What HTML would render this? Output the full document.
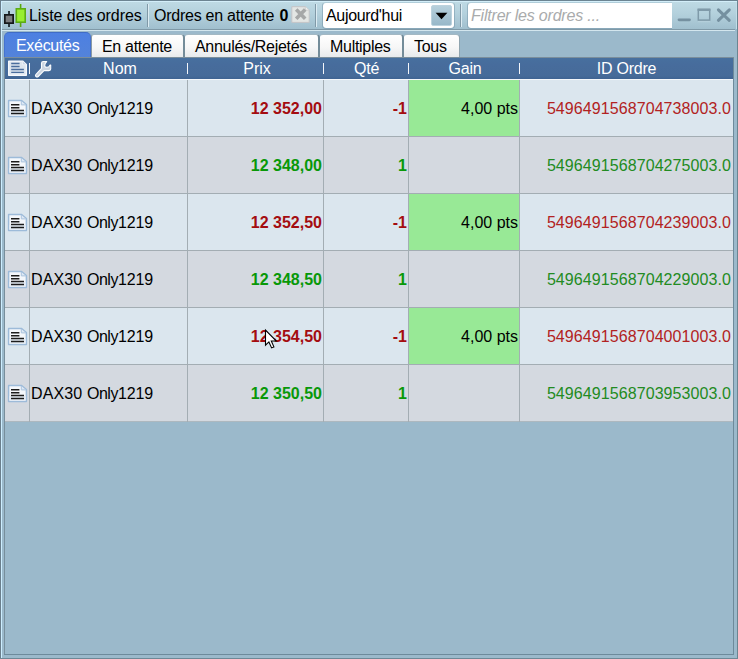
<!DOCTYPE html>
<html lang="fr">
<head>
<meta charset="utf-8">
<title>Liste des ordres</title>
<style>
html,body{margin:0;padding:0;}
body{width:738px;height:659px;overflow:hidden;background:#9bb9cb;font-family:"Liberation Sans",Arial,sans-serif;font-size:16px;color:#000;}
#win{position:absolute;left:0;top:0;width:738px;height:659px;background:#9bb9cb;overflow:hidden;}
.abs{position:absolute;}
/* toolbar */
#tb{left:2px;top:2px;width:734px;height:27px;background:linear-gradient(#bedae4,#b3d0dc 45%,#a0bfce);}
#tb-b0{left:2px;top:29px;width:733px;height:1px;background:#7f99a7;}
#tb-b1{left:2px;top:30px;width:733px;height:1px;background:#d3e6ee;}
.sep{width:1px;background:#8099a7;top:4px;height:23px;}
.sepl{width:1px;background:#dcecf3;top:4px;height:23px;}
.tbt{top:6px;line-height:20px;white-space:nowrap;}
/* tabs */
.tab{top:34px;height:23px;box-sizing:border-box;border:0 solid #748c99;border-top:1px solid #a3b8c3;border-right:2px solid #748c99;border-radius:3px 4px 0 0;background:linear-gradient(#ffffff,#f7f7f7 55%,#e8eaec);}
.tab.sel{top:32px;height:25px;border:1px solid #4573cf;border-bottom:none;border-top-color:#3f6cc6;border-radius:5px 5px 0 0;background:linear-gradient(#4d80e2,#5383da);}
.tt{line-height:20px;white-space:nowrap;letter-spacing:-0.3px;}
/* header */
#hd{left:5px;top:57px;width:728px;height:22px;background:linear-gradient(#47709f,#476c9c 35%,#466b99 85%,#3f6392);}
.ht{top:59px;line-height:20px;color:#fff;text-align:center;white-space:nowrap;}
.hs{top:63px;width:1px;height:11px;background:#f2f5f9;}
/* rows */
.row{left:5px;width:728px;height:56px;}
.odd{background:#dbe6ee;}
.even{background:#d4d9e0;}
.hl{left:5px;width:728px;height:1px;background:#a3adb3;}
.hl.last{background:#adb8bf;}
.vl{top:80px;width:1px;height:342px;background:#a3adb3;}
.gain{left:409px;width:110px;height:56px;background:#98e996;}
.c{line-height:20px;white-space:nowrap;}
.nm{left:31px;}
.w1{letter-spacing:0.13px;}
.w2{letter-spacing:-0.45px;}
.w3{letter-spacing:-0.15px;}
.px{left:188px;width:134px;text-align:right;font-weight:bold;}
.qt{left:324px;width:83px;text-align:right;font-weight:bold;}
.gn{left:409px;width:109px;text-align:right;}
.id{left:520px;width:211px;text-align:right;letter-spacing:0.08px;}
.r{color:#a40c10;}
.g{color:#089808;}
.idr{color:#b22222;}
.idg{color:#228b22;}
</style>
</head>
<body>
<div id="win">
  <div class="abs" id="tb"></div>
  <div class="abs" id="tb-b0"></div>
  <div class="abs" id="tb-b1"></div>
  <!-- frame -->
  <div class="abs" style="left:0;top:0;width:738px;height:1px;background:#6c8492"></div>
  <div class="abs" style="left:1px;top:1px;width:736px;height:1px;background:#d3eef9"></div>
  <div class="abs" style="left:0;top:0;width:1px;height:659px;background:#6b7f8c"></div>
  <div class="abs" style="left:1px;top:1px;width:1px;height:657px;background:#cdeeff"></div>
  <div class="abs" style="left:737px;top:0;width:1px;height:659px;background:#6b8591"></div>
  <div class="abs" style="left:736px;top:2px;width:1px;height:27px;background:#c2dde8"></div>
  <div class="abs" style="left:0;top:658px;width:738px;height:1px;background:#6e8896"></div>
  <div class="abs" style="left:4px;top:57px;width:1px;height:597px;background:#778e9b"></div>
  <div class="abs" style="left:733px;top:57px;width:1px;height:598px;background:#6e8a9b"></div>
  <div class="abs" style="left:4px;top:654px;width:730px;height:1px;background:#6d8a9b"></div>

  <!-- candle icon -->
  <svg class="abs" style="left:2px;top:2px" width="26" height="27" viewBox="0 0 26 27">
    <rect x="6" y="9" width="2" height="16" fill="#2c3940"/>
    <rect x="2.85" y="12.85" width="8.3" height="8.3" fill="#7b7d80" stroke="#15181a" stroke-width="1.7"/>
    <rect x="17.8" y="2" width="1.6" height="23" fill="#5aa80e"/>
    <rect x="14.3" y="6.8" width="8.9" height="13.4" fill="#98ee30" stroke="#5cad12" stroke-width="1.6"/>
  </svg>
  <div class="abs tbt" style="left:29px;letter-spacing:-0.07px">Liste des ordres</div>
  <div class="abs sep" style="left:147px"></div><div class="abs sepl" style="left:148px"></div>
  <div class="abs tbt" style="left:154px;letter-spacing:-0.25px">Ordres en attente <b style="margin-left:1px">0</b></div>
  <svg class="abs" style="left:290px;top:5px" width="22" height="20" viewBox="0 0 22 20">
    <path d="M1.8 1.7 L15.4 1.7 L19.2 5.2 L19.2 17.4 L1.8 17.4 Z" fill="#e3e6e4" stroke="#c4c4c6" stroke-width="1"/>
    <path d="M15.4 1.7 L15.4 5.2 L19.2 5.2" fill="#eef0ef" stroke="#cbcccd" stroke-width="0.8"/>
    <path d="M6.2 4.6 L15.2 13.8 M15.2 4.6 L6.2 13.8" stroke="#a6a8a8" stroke-width="3.6" stroke-linecap="butt"/>
  </svg>
  <div class="abs sep" style="left:315px"></div><div class="abs sepl" style="left:316px"></div>
  <!-- combo -->
  <div class="abs" style="left:322px;top:2px;width:133px;height:27px;box-sizing:border-box;border:1px solid rgba(110,140,160,0.45);border-top-color:rgba(150,180,195,0.3);border-radius:4px;background:#fff;background-clip:padding-box;"></div>
  <div class="abs tbt" style="left:326px;letter-spacing:-0.33px">Aujourd'hui</div>
  <div class="abs" style="left:431px;top:5px;width:21px;height:21px;box-sizing:border-box;border:1px solid #bcd3de;border-radius:2px;background:linear-gradient(#b6d0dc,#98b8c9);"></div>
  <svg class="abs" style="left:435px;top:12px" width="13" height="8" viewBox="0 0 13 8"><path d="M0.6 0.8 L12.4 0.8 L6.5 7.2 Z" fill="#000"/></svg>
  <div class="abs sep" style="left:460px"></div><div class="abs sepl" style="left:461px"></div>
  <!-- filter -->
  <div class="abs" style="left:467px;top:2px;width:205px;height:27px;box-sizing:border-box;border:1px solid rgba(110,140,160,0.45);border-top-color:rgba(150,180,195,0.3);border-right:none;border-radius:4px 0 0 4px;background:#fff;background-clip:padding-box;"></div>
  <div class="abs tbt" style="left:471px;font-style:italic;color:#a9abac;letter-spacing:-0.2px">Filtrer les ordres ...</div>
  <!-- window buttons -->
  <svg class="abs" style="left:674px;top:4px" width="60" height="22" viewBox="0 0 60 22">
    <path d="M5 15.8 H15.5" stroke="#7590a0" stroke-width="2.8" stroke-linecap="round"/>
    <path d="M24 17.6 H36" stroke="#b4cfdb" stroke-width="1.2"/>
    <rect x="24.3" y="5.5" width="11.4" height="10.6" fill="none" stroke="#7f9aa9" stroke-width="1.5"/>
    <rect x="23.6" y="4.6" width="12.8" height="2.4" fill="#7f9aa9"/>
    <path d="M44.4 5.8 L55.3 16.3 M55.3 5.8 L44.4 16.3" stroke="#7590a0" stroke-width="3" stroke-linecap="round"/>
  </svg>

  <!-- tabs -->
  <div class="abs tab sel" style="left:4px;width:87px"></div>
  <div class="abs tt" style="left:16px;top:36px;color:#fff">Exécutés</div>
  <div class="abs tab" style="left:91px;width:94px;border-left:1px solid #8a9aa4"></div>
  <div class="abs tt" style="left:102px;top:37px">En attente</div>
  <div class="abs tab" style="left:185px;width:135px"></div>
  <div class="abs tt" style="left:195px;top:37px">Annulés/Rejetés</div>
  <div class="abs tab" style="left:320px;width:84px"></div>
  <div class="abs tt" style="left:330px;top:37px">Multiples</div>
  <div class="abs tab" style="left:404px;width:56px;border-right:1px solid #8fa4af"></div>
  <div class="abs tt" style="left:414px;top:37px">Tous</div>

  <!-- header -->
  <div class="abs" id="hd"></div>
  <div class="abs" style="left:5px;top:79px;width:728px;height:1px;background:#f4f7fa"></div>
  <div class="abs" style="left:4px;top:57px;width:730px;height:1px;background:#7b8e9b"></div>
  <svg class="abs" style="left:5px;top:57px" width="55" height="22" viewBox="0 0 55 22">
    <path d="M3.7 4.1 L17.6 4.1 L21.3 7.6 L21.3 18.3 L3.7 18.3 Z" fill="#dde5ee" stroke="#f6f8fb" stroke-width="1.4" stroke-linejoin="round"/>
    <path d="M17.4 4.3 L17.4 7.8 L21.1 7.8" fill="#c9d6e6" stroke="#eef2f7" stroke-width="0.9"/>
    <path d="M6.2 6.5 H14.6 M6.2 9.5 H14.6 M6.2 12.5 H18.9 M6.2 15.4 H18.9" stroke="#4a6d9d" stroke-width="1.3"/>
    <rect x="24" y="6" width="1" height="11" fill="#f2f5f9"/>
    <path d="M31 17.4 L36.5 11.4 L36.5 6.3 Q36.5 4.5 38.3 4.5 L41.7 4.5 Q39.7 6.4 39.7 8.4 Q39.7 10.3 41.7 10.3 Q44.2 10.3 45 8.1 L45.7 8.1 L45.7 12 Q45.7 13.6 43.9 13.6 L39 13.6 L33.2 19.5 Q32.1 20.5 31 19.5 Q29.9 18.5 31 17.4 Z" fill="#cbd5e2" stroke="#fbfcfd" stroke-width="1.1" stroke-linejoin="round"/>
  </svg>
  <div class="abs ht" style="left:56px;width:128px">Nom</div>
  <div class="abs hs" style="left:187px"></div>
  <div class="abs ht" style="left:190px;width:134px">Prix</div>
  <div class="abs hs" style="left:323px"></div>
  <div class="abs ht" style="left:325px;width:83px;letter-spacing:-0.2px">Qté</div>
  <div class="abs hs" style="left:408px"></div>
  <div class="abs ht" style="left:410.5px;width:109px;letter-spacing:-0.25px">Gain</div>
  <div class="abs hs" style="left:519px"></div>
  <div class="abs ht" style="left:521px;width:211px;letter-spacing:-0.25px">ID Ordre</div>

  <!-- rows -->
  <div class="abs row odd" style="top:80px"></div>
  <div class="abs gain" style="top:80px"></div>
  <div class="abs row even" style="top:137px"></div>
  <div class="abs row odd" style="top:194px"></div>
  <div class="abs gain" style="top:194px"></div>
  <div class="abs row even" style="top:251px"></div>
  <div class="abs row odd" style="top:308px"></div>
  <div class="abs gain" style="top:308px"></div>
  <div class="abs row even" style="top:365px"></div>
  <div class="abs hl" style="top:136px"></div>
  <div class="abs hl" style="top:193px"></div>
  <div class="abs hl" style="top:250px"></div>
  <div class="abs hl" style="top:307px"></div>
  <div class="abs hl" style="top:364px"></div>
  <div class="abs hl last" style="top:421px"></div>
  <div class="abs vl" style="left:29px"></div>
  <div class="abs vl" style="left:187px"></div>
  <div class="abs vl" style="left:323px"></div>
  <div class="abs vl" style="left:408px"></div>
  <div class="abs vl" style="left:519px"></div>
<svg class="abs" style="left:7px;top:99px" width="21" height="19" viewBox="0 0 21 19">
    <path d="M1.6 1.6 L14.6 1.6 L19.4 5.6 L19.4 17.4 L1.6 17.4 Z" fill="#f4f7fb" stroke="#9dbbd9" stroke-width="1.5" stroke-linejoin="round"/>
    <path d="M2.4 12 H18.6 V16.6 H2.4 Z" fill="#e4ecf5"/>
    <path d="M14.3 2 L14.3 5.9 L19 5.9" fill="#dde8f4" stroke="#abc4df" stroke-width="1"/>
    <path d="M4 5.8 H12.4 M4 8.7 H12.4 M4 11.5 H17 M4 14.4 H17" stroke="#1c1c1c" stroke-width="1.5"/>
  </svg>
  <div class="abs c nm" style="top:99px"><span class="w1">DAX30 </span><span class="w2">Only</span><span class="w3">1219</span></div>
  <div class="abs c px r" style="top:99px">12 352,00</div>
  <div class="abs c qt r" style="top:99px">-1</div>
  <div class="abs c gn" style="top:99px">4,00 pts</div>
  <div class="abs c id idr" style="top:99px">5496491568704738003.0</div>
<svg class="abs" style="left:7px;top:156px" width="21" height="19" viewBox="0 0 21 19">
    <path d="M1.6 1.6 L14.6 1.6 L19.4 5.6 L19.4 17.4 L1.6 17.4 Z" fill="#f4f7fb" stroke="#9dbbd9" stroke-width="1.5" stroke-linejoin="round"/>
    <path d="M2.4 12 H18.6 V16.6 H2.4 Z" fill="#e4ecf5"/>
    <path d="M14.3 2 L14.3 5.9 L19 5.9" fill="#dde8f4" stroke="#abc4df" stroke-width="1"/>
    <path d="M4 5.8 H12.4 M4 8.7 H12.4 M4 11.5 H17 M4 14.4 H17" stroke="#1c1c1c" stroke-width="1.5"/>
  </svg>
  <div class="abs c nm" style="top:156px"><span class="w1">DAX30 </span><span class="w2">Only</span><span class="w3">1219</span></div>
  <div class="abs c px g" style="top:156px">12 348,00</div>
  <div class="abs c qt g" style="top:156px">1</div>
  <div class="abs c id idg" style="top:156px">5496491568704275003.0</div>
<svg class="abs" style="left:7px;top:213px" width="21" height="19" viewBox="0 0 21 19">
    <path d="M1.6 1.6 L14.6 1.6 L19.4 5.6 L19.4 17.4 L1.6 17.4 Z" fill="#f4f7fb" stroke="#9dbbd9" stroke-width="1.5" stroke-linejoin="round"/>
    <path d="M2.4 12 H18.6 V16.6 H2.4 Z" fill="#e4ecf5"/>
    <path d="M14.3 2 L14.3 5.9 L19 5.9" fill="#dde8f4" stroke="#abc4df" stroke-width="1"/>
    <path d="M4 5.8 H12.4 M4 8.7 H12.4 M4 11.5 H17 M4 14.4 H17" stroke="#1c1c1c" stroke-width="1.5"/>
  </svg>
  <div class="abs c nm" style="top:213px"><span class="w1">DAX30 </span><span class="w2">Only</span><span class="w3">1219</span></div>
  <div class="abs c px r" style="top:213px">12 352,50</div>
  <div class="abs c qt r" style="top:213px">-1</div>
  <div class="abs c gn" style="top:213px">4,00 pts</div>
  <div class="abs c id idr" style="top:213px">5496491568704239003.0</div>
<svg class="abs" style="left:7px;top:270px" width="21" height="19" viewBox="0 0 21 19">
    <path d="M1.6 1.6 L14.6 1.6 L19.4 5.6 L19.4 17.4 L1.6 17.4 Z" fill="#f4f7fb" stroke="#9dbbd9" stroke-width="1.5" stroke-linejoin="round"/>
    <path d="M2.4 12 H18.6 V16.6 H2.4 Z" fill="#e4ecf5"/>
    <path d="M14.3 2 L14.3 5.9 L19 5.9" fill="#dde8f4" stroke="#abc4df" stroke-width="1"/>
    <path d="M4 5.8 H12.4 M4 8.7 H12.4 M4 11.5 H17 M4 14.4 H17" stroke="#1c1c1c" stroke-width="1.5"/>
  </svg>
  <div class="abs c nm" style="top:270px"><span class="w1">DAX30 </span><span class="w2">Only</span><span class="w3">1219</span></div>
  <div class="abs c px g" style="top:270px">12 348,50</div>
  <div class="abs c qt g" style="top:270px">1</div>
  <div class="abs c id idg" style="top:270px">5496491568704229003.0</div>
<svg class="abs" style="left:7px;top:327px" width="21" height="19" viewBox="0 0 21 19">
    <path d="M1.6 1.6 L14.6 1.6 L19.4 5.6 L19.4 17.4 L1.6 17.4 Z" fill="#f4f7fb" stroke="#9dbbd9" stroke-width="1.5" stroke-linejoin="round"/>
    <path d="M2.4 12 H18.6 V16.6 H2.4 Z" fill="#e4ecf5"/>
    <path d="M14.3 2 L14.3 5.9 L19 5.9" fill="#dde8f4" stroke="#abc4df" stroke-width="1"/>
    <path d="M4 5.8 H12.4 M4 8.7 H12.4 M4 11.5 H17 M4 14.4 H17" stroke="#1c1c1c" stroke-width="1.5"/>
  </svg>
  <div class="abs c nm" style="top:327px"><span class="w1">DAX30 </span><span class="w2">Only</span><span class="w3">1219</span></div>
  <div class="abs c px r" style="top:327px">12 354,50</div>
  <div class="abs c qt r" style="top:327px">-1</div>
  <div class="abs c gn" style="top:327px">4,00 pts</div>
  <div class="abs c id idr" style="top:327px">5496491568704001003.0</div>
<svg class="abs" style="left:7px;top:384px" width="21" height="19" viewBox="0 0 21 19">
    <path d="M1.6 1.6 L14.6 1.6 L19.4 5.6 L19.4 17.4 L1.6 17.4 Z" fill="#f4f7fb" stroke="#9dbbd9" stroke-width="1.5" stroke-linejoin="round"/>
    <path d="M2.4 12 H18.6 V16.6 H2.4 Z" fill="#e4ecf5"/>
    <path d="M14.3 2 L14.3 5.9 L19 5.9" fill="#dde8f4" stroke="#abc4df" stroke-width="1"/>
    <path d="M4 5.8 H12.4 M4 8.7 H12.4 M4 11.5 H17 M4 14.4 H17" stroke="#1c1c1c" stroke-width="1.5"/>
  </svg>
  <div class="abs c nm" style="top:384px"><span class="w1">DAX30 </span><span class="w2">Only</span><span class="w3">1219</span></div>
  <div class="abs c px g" style="top:384px">12 350,50</div>
  <div class="abs c qt g" style="top:384px">1</div>
  <div class="abs c id idg" style="top:384px">5496491568703953003.0</div>

  <!-- mouse cursor -->
  <svg class="abs" style="left:263px;top:328px" width="16" height="24" viewBox="0 0 16 24">
    <path d="M2.5 2.2 L2.5 17.2 L5.9 13.9 L8.6 19.9 L10.9 18.9 L8.3 13 L13.3 13 Z" fill="#fff" stroke="#000" stroke-width="1.1" stroke-linejoin="miter"/>
  </svg>
</div>
</body>
</html>
